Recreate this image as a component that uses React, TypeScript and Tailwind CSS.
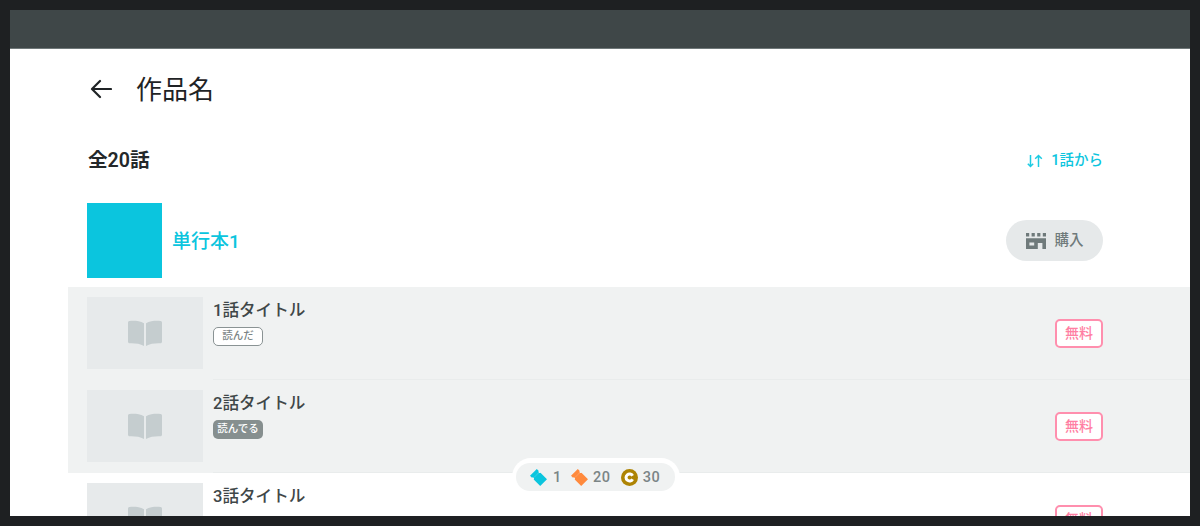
const font = { fontFamily: 'Roboto, "Noto Sans CJK JP", sans-serif' }

function BackIcon() {
  return (
    <svg width="24" height="24" viewBox="0 0 24 24" fill="none" stroke="#1f2325" strokeWidth="2.2" strokeLinecap="round" strokeLinejoin="round">
      <path d="M23 11H4.5M12 3 4 11l8 8" />
    </svg>
  )
}

function BookIcon() {
  return (
    <svg width="36" height="28" viewBox="0 0 36 28" fill="#c5cdcf">
      <path d="M1 3.5C1 2.5 1.7 1.9 2.6 1.9 8 1.6 13 2 17 4.2V27C13 24.6 8 24 2.6 24.2 1.7 24.2 1 23.6 1 22.7Z" />
      <path d="M35 3.5C35 2.5 34.3 1.9 33.4 1.9 28 1.6 23 2 19 4.2V27C23 24.6 28 24 33.4 24.2 34.3 24.2 35 23.6 35 22.7Z" />
    </svg>
  )
}

function Ticket({ color }: { color: string }) {
  return (
    <svg width="17" height="17" viewBox="-8.5 -8.5 17 17" className="shrink-0">
      <g transform="rotate(45)">
        <path
          fill={color}
          d="M-7.2 -4.8H-4.4A1.2 1.2 0 0 0 -2 -4.8H7.2V4.8H-2A1.2 1.2 0 0 0 -4.4 4.8H-7.2Z"
        />
        <path d="M-3.2 -2.8V2.8" stroke="#ffffff" strokeOpacity="0.5" strokeWidth="0.7" strokeDasharray="1 0.8" />
      </g>
    </svg>
  )
}

function Coin() {
  return (
    <svg width="17" height="17" viewBox="0 0 17 17" className="shrink-0">
      <circle cx="8.5" cy="8.5" r="8.5" fill="#ae8404" />
      <path d="M11.6 6.8A3.5 3.5 0 1 0 11.6 10.2" fill="none" stroke="#ffffff" strokeWidth="3" />
    </svg>
  )
}

function SortIcon() {
  return (
    <svg width="16" height="14" viewBox="0 0 16 14" fill="none" stroke="#1ccbe2" strokeWidth="1.5">
      <path d="M3.5 1V12.5M0.8 9.8 3.5 12.5 6.2 9.8" />
      <path d="M11.5 13V1.5M8.2 4.8 11.5 1.5 14.8 4.8" />
    </svg>
  )
}

function StoreIcon() {
  return (
    <svg width="20" height="16" viewBox="0 0 20 16" fill="#6f7a7b">
      <path d="M0 0H3.2V3.4H0ZM5.6 0H8.8V3.4H5.6ZM11.2 0H14.4V3.4H11.2ZM16.8 0H20V3.4H16.8Z" />
      <path fillRule="evenodd" d="M0 5.2H20V16H16.4V10H11.8V16H0ZM3.4 9.4V12.4H8.2V9.4Z" />
    </svg>
  )
}

type Episode = {
  title: string
  status?: 'read' | 'reading'
  shaded: boolean
}

const episodes: Episode[] = [
  { title: '1話タイトル', status: 'read', shaded: true },
  { title: '2話タイトル', status: 'reading', shaded: true },
  { title: '3話タイトル', shaded: false },
]

function EpisodeRow({ episode }: { episode: Episode }) {
  return (
    <div className={`flex h-[93px] shrink-0 pl-[19px] ${episode.shaded ? 'bg-[#f0f2f2]' : 'bg-white'}`}>
      <div className="mt-[10px] flex h-[72px] w-[116px] shrink-0 items-center justify-center bg-[#e7eaeb]">
        <BookIcon />
      </div>
      <div className="ml-[10px] flex flex-1 items-start border-b border-[#e9ecec] pt-[10px] pr-[87px]">
        <div className="flex-1 pt-[1px]">
          <div className="text-[16.6px] leading-[26px] font-medium text-[#3f4748]">{episode.title}</div>
          {episode.status === 'read' && (
            <div className="mt-[3px] flex h-[19px] w-[50px] items-center justify-center rounded-[5px] border-[1.5px] border-[#8a9394] bg-white pb-[1px] text-[10.5px] font-medium text-[#7b8586]">
              読んだ
            </div>
          )}
          {episode.status === 'reading' && (
            <div className="mt-[3px] flex h-[19px] w-[50px] items-center justify-center rounded-[5px] bg-[#868f8f] pb-[1px] text-[10.5px] font-medium text-white">
              読んでる
            </div>
          )}
        </div>
        <div className="mt-[22px] flex h-[29px] w-[48px] items-center justify-center rounded-[5px] border-2 border-[#ff8fae] bg-white text-[14px] font-medium text-[#ff7fa3]">
          無料
        </div>
      </div>
    </div>
  )
}

export default function App() {
  return (
    <div className="h-[526px] w-[1200px] overflow-hidden bg-[#1e2022] p-[10px]" style={font}>
      <div className="relative flex h-[506px] flex-col overflow-hidden bg-white">
        <div className="h-[39px] shrink-0 border-b border-[#6f7879] bg-[#3f4748]" />

        <div className="flex h-[80px] shrink-0 items-center pl-[78px] pt-[2px]">
          <BackIcon />
          <h1 className="ml-[24px] text-[26px] leading-none text-[#1f2325]">作品名</h1>
        </div>

        <div className="flex h-[64px] shrink-0 items-center justify-between pl-[78px] pr-[87px]">
          <div className="text-[19.6px] font-semibold text-[#24282a]">全20話</div>
          <div className="flex items-center text-[14.5px] font-medium text-[#0bc5de]">
            <SortIcon />
            <span className="ml-[8px]">1話から</span>
          </div>
        </div>

        <div className="mt-[10px] flex shrink-0 items-center pl-[77px] pr-[87px]">
          <div className="h-[75px] w-[75px] bg-[#0bc5de]" />
          <div className="ml-[10px] pt-[3px] text-[19px] font-medium text-[#0bc5de]">単行本1</div>
          <div className="ml-auto flex h-[41px] w-[97px] items-center justify-center rounded-full bg-[#e6e9ea] text-[14.5px] font-medium text-[#6f7a7b]">
            <StoreIcon />
            <span className="ml-[9px] pt-[1px]">購入</span>
          </div>
        </div>

        <div className="mt-[9px] ml-[58px] flex flex-col">
          {episodes.map((episode) => (
            <EpisodeRow key={episode.title} episode={episode} />
          ))}
        </div>

        <div className="absolute top-[448px] left-[502px] rounded-full bg-white py-[5px] pr-[5px] pl-[4px]">
          <div className="flex h-[28px] w-[159px] items-center rounded-full bg-[#f0f2f2] pl-[14px] text-[14.5px] font-medium tracking-[0.6px] text-[#7b8586]">
            <Ticket color="#0bc5de" />
            <span className="ml-[6px] w-[12px] pt-[1px]">1</span>
            <span className="ml-[6px]">
              <Ticket color="#ff8a3d" />
            </span>
            <span className="ml-[5px] pt-[1px]">20</span>
            <span className="ml-[10px]">
              <Coin />
            </span>
            <span className="ml-[5px] pt-[1px]">30</span>
          </div>
        </div>
      </div>
    </div>
  )
}
